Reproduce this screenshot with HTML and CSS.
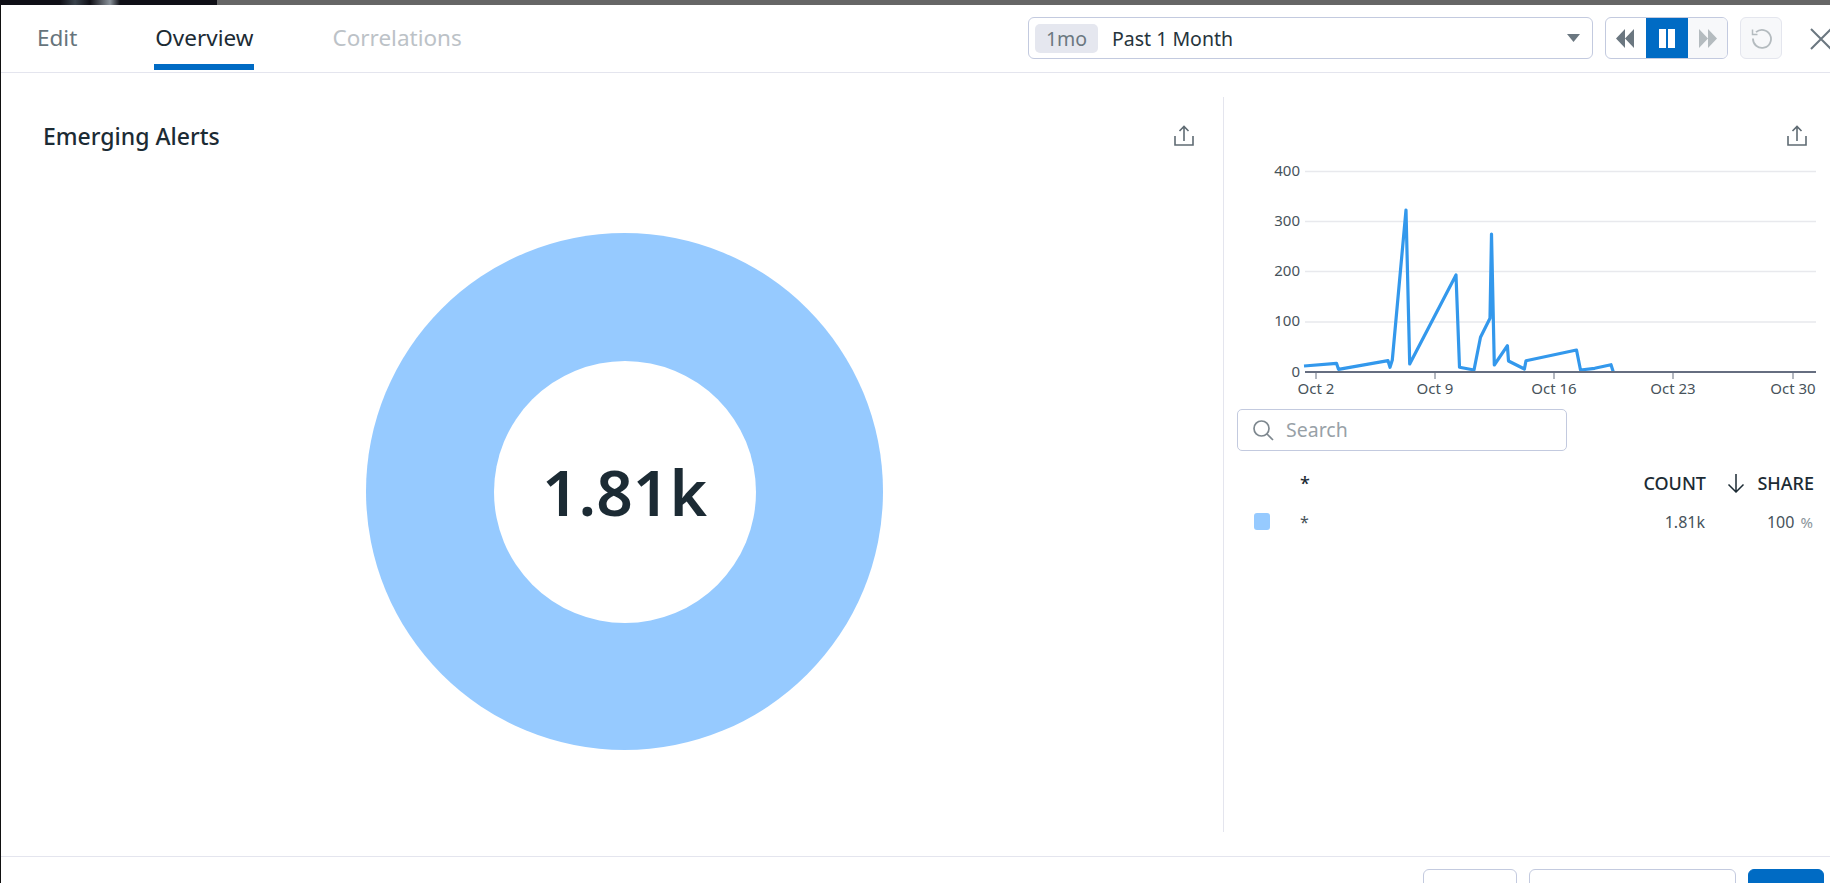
FILE: index.html
```html
<!DOCTYPE html>
<html lang="en">
<head>
    <meta charset="UTF-8">
    <title>Emerging Alerts</title>
    <link rel="stylesheet" href="styles.css">
</head>
<body>
    <div class="top-strip">
        <div class="top-strip-dark"></div>
    </div>
    <div class="modal">
        <header class="modal-header">
            <nav class="tabs">
                <a class="tab tab-edit">Edit</a>
                <a class="tab tab-active">Overview</a>
                <a class="tab tab-disabled">Correlations</a>
            </nav>
            <div class="time-select">
                <span class="time-pill">1mo</span>
                <span class="time-label">Past 1 Month</span>
                <svg class="caret" width="13" height="8" viewBox="0 0 13 8"><path d="M0 0h13L6.5 8z" fill="#6b7780"/></svg>
            </div>
            <div class="playback">
                <button class="play-btn play-back">
                    <svg width="18" height="19" viewBox="0 0 18 19"><path d="M9 0v19L0 9.500zM18 0v19L9 9.500z" fill="#6b7780"/></svg>
                </button>
                <button class="play-btn play-active">
                    <svg width="16" height="19" viewBox="0 0 16 19"><path d="M0 0h7v19H0zM9 0h7v19H9z" fill="#fff"/></svg>
                </button>
                <button class="play-btn play-off">
                    <svg width="18" height="19" viewBox="0 0 18 19"><path d="M0 0v19l9-9.500zM9 0v19l9-9.500z" fill="#b4bbbf"/></svg>
                </button>
            </div>
            <button class="reset-btn">
                <svg width="22" height="22" viewBox="0 0 22 22" fill="none" stroke="#b4bbbf" stroke-width="1.800"><path d="M6 5.200A9 9 0 1 1 3 11.500"/><path d="M2.500 2.500v5h5" stroke-width="1.500"/></svg>
            </button>
            <svg class="close-icon" width="20" height="22" viewBox="0 0 20 22" fill="none" stroke="#6b7780" stroke-width="2"><path d="M1 1l20 20M21 1L1 21"/></svg>
        </header>

        <main class="content">
            <section class="left-panel">
                <div class="panel-title-row">
                    <h2 class="panel-title">Emerging Alerts</h2>
                    <svg class="export-icon" width="20" height="21" viewBox="0 0 20 21" fill="none" stroke="#5f6b73" stroke-width="1.600"><path d="M1 11v9h18v-9M10 16V2M5.500 6L10 1.500 14.500 6"/></svg>
                </div>
                <div class="donut">
                    <div class="donut-hole">1.81k</div>
                </div>
            </section>

            <section class="right-panel">
                <div class="export-row">
                    <svg class="export-icon" width="20" height="21" viewBox="0 0 20 21" fill="none" stroke="#5f6b73" stroke-width="1.600"><path d="M1 11v9h18v-9M10 16V2M5.500 6L10 1.500 14.500 6"/></svg>
                </div>
                <svg class="chart" width="606" height="252" viewBox="1224 150 606 252">
                    <g stroke="#e8e9ed" stroke-width="1.500">
                        <path d="M1305 171.500H1816M1305 221.500H1816M1305 271.500H1816M1305 322H1816"/>
                    </g>
                    <g class="axis-y" text-anchor="end">
                        <text x="1300" y="176">400</text>
                        <text x="1300" y="226">300</text>
                        <text x="1300" y="276">200</text>
                        <text x="1300" y="326">100</text>
                        <text x="1300" y="377">0</text>
                    </g>
                    <polyline fill="none" stroke="#3398ec" stroke-width="3.200" stroke-linejoin="round" points="1304,366 1336.500,363.300 1338.500,369.300 1388,360.700 1390,367.300 1392.300,360 1406,210 1409.700,364 1456,275 1459.500,367.300 1474,370 1480.500,337.300 1490,318.300 1491.500,234 1494.300,365 1507.400,345.700 1508.500,361 1524.400,369 1526,360.700 1576.500,350 1580.500,370 1594.700,368.300 1611,364.700 1613.300,372"/>
                    <path d="M1305 372H1816" stroke="#666e80" stroke-width="2"/>
                    <path d="M1316 372v7M1435 372v7M1554 372v7M1673 372v7M1793 372v7" stroke="#666e80" stroke-width="1"/>
                    <g class="axis-x" text-anchor="middle">
                        <text x="1316" y="394">Oct 2</text>
                        <text x="1435" y="394">Oct 9</text>
                        <text x="1554" y="394">Oct 16</text>
                        <text x="1673" y="394">Oct 23</text>
                        <text x="1793" y="394">Oct 30</text>
                    </g>
                </svg>
                <div class="search-box">
                    <svg width="22" height="22" viewBox="0 0 22 22" fill="none" stroke="#7d878e" stroke-width="1.700"><circle cx="9.500" cy="9.500" r="7.500"/><path d="M15 15l6 6"/></svg>
                    <span class="search-placeholder">Search</span>
                </div>
                <div class="legend-row legend-head">
                    <span class="legend-swatch-col"></span>
                    <span class="legend-name">*</span>
                    <span class="legend-count">COUNT</span>
                    <svg class="sort-arrow" width="18" height="20" viewBox="0 0 18 20" fill="none" stroke="#1c2b34" stroke-width="1.500"><path d="M9 1v18M1.500 11.500L9 19l7.500-7.500"/></svg>
                    <span class="legend-share">SHARE</span>
                </div>
                <div class="legend-row legend-body">
                    <span class="legend-swatch-col"><i class="swatch"></i></span>
                    <span class="legend-name">*</span>
                    <span class="legend-count">1.81k</span>
                    <span class="legend-share">100 <small>%</small></span>
                </div>
            </section>
        </main>

        <footer class="modal-footer">
            <button class="foot-btn foot-small"></button>
            <button class="foot-btn foot-wide"></button>
            <button class="foot-btn foot-primary"></button>
        </footer>
    </div>
</body>
</html>
```

FILE: styles.css
```css
html, body {
    margin: 0;
    padding: 0;
    height: 883px;
    overflow: hidden;
}
body {
    font-family: "Noto Sans", sans-serif;
    color: #1c2b34;
    background: #fff;
}
button {
    padding: 0;
    font: inherit;
    background: none;
    display: flex;
    align-items: center;
    justify-content: center;
}
.top-strip {
    height: 5px;
    background: #666;
}
.top-strip-dark {
    width: 217px;
    height: 5px;
    background: linear-gradient(to right, #0f0f16 60px, #39424c 75px, #0f0f16 90px, #8a929a 110px, #0f0f16 120px);
}
.modal {
    height: 878px;
    border-left: 1px solid #111;
    overflow: hidden;
}
.modal-header {
    height: 67px;
    border-bottom: 1px solid #e4e5ee;
    display: flex;
    align-items: flex-start;
    padding-left: 35px;
}
.tabs {
    display: flex;
    height: 65px;
}
.tab {
    font-size: 22.5px;
    line-height: 30px;
    padding: 18px 1px 0;
    height: 47px;
    color: #66747c;
}
.tab-active {
    color: #1c2b34;
    height: 41px;
    margin: 0 77px 0 76px;
    border-bottom: 6px solid #006bc4;
}
.tab-disabled {
    color: #bcc2c7;
}
.time-select {
    width: 565px;
    height: 42px;
    box-sizing: border-box;
    margin: 12px 0 0 auto;
    border: 1px solid #c3cadf;
    border-radius: 6px;
    display: flex;
    align-items: center;
    padding: 0 12px 0 6px;
}
.time-pill {
    width: 63px;
    height: 29px;
    line-height: 29px;
    text-align: center;
    background: #e5e7ef;
    border-radius: 5px;
    font-size: 19.5px;
    color: #6b7780;
}
.time-label {
    font-size: 19.5px;
    margin-left: 14px;
    flex: 1;
    color: #26343c;
}
.playback {
    display: flex;
    margin: 12px 0 0 12px;
    height: 42px;
    width: 123px;
    box-sizing: border-box;
    border: 1px solid #c3cadf;
    border-radius: 6px;
    overflow: hidden;
}
.play-btn {
    width: 40px;
    flex: none;
    border: none;
}
.play-back {
    padding-right: 3px;
}
.play-active {
    width: 42px;
    background: #006bc4;
}
.play-off {
    width: 39px;
    background: #f7f8fa;
}
.reset-btn {
    width: 42px;
    height: 42px;
    margin: 12px 0 0 12px;
    box-sizing: border-box;
    border: 1px solid #e4e6ee;
    border-radius: 6px;
    background: #f7f8fa;
}
.close-icon {
    margin: 23px 0 0 28px;
    flex: none;
}
.content {
    display: flex;
    height: 783px;
}
.left-panel {
    width: 1223px;
    box-sizing: border-box;
    margin: 24px 0;
    height: 735px;
    border-right: 1px solid #e4e5ee;
    padding: 28px 29px 0 42px;
}
.panel-title-row {
    display: flex;
    justify-content: space-between;
    align-items: center;
    height: 21px;
}
.panel-title {
    margin: 0;
    font-size: 23px;
    font-weight: 500;
}
.donut {
    width: 517px;
    height: 517px;
    margin: 87px 0 0 323px;
    border-radius: 50%;
    background: #96caff;
    display: flex;
    align-items: center;
    justify-content: center;
}
.donut-hole {
    width: 262px;
    height: 262px;
    border-radius: 50%;
    background: #fff;
    display: flex;
    align-items: center;
    justify-content: center;
    font-size: 64px;
    font-weight: 600;
}
.right-panel {
    flex: 1;
    padding-top: 52px;
    min-width: 0;
}
.export-row {
    display: flex;
    justify-content: flex-end;
    padding-right: 23px;
    height: 25px;
}
.chart {
    display: block;
}
.chart text {
    font-family: "Noto Sans", sans-serif;
    font-size: 15px;
    fill: #47535b;
}
.search-box {
    margin: 7px 0 0 13px;
    width: 330px;
    height: 42px;
    box-sizing: border-box;
    border: 1px solid #c3cadf;
    border-radius: 5px;
    display: flex;
    align-items: center;
    padding-left: 14px;
    gap: 12px;
}
.search-placeholder {
    font-size: 19.5px;
    color: #98a1a7;
    padding-bottom: 2px;
}
.legend-row {
    display: flex;
    align-items: center;
    height: 39px;
    padding-right: 16px;
}
.legend-head {
    margin-top: 12px;
    font-size: 18px;
    font-weight: 500;
}
.legend-body {
    font-size: 16px;
    color: #47535b;
    padding-right: 17px;
}
.legend-swatch-col {
    width: 76px;
    padding-left: 30px;
    box-sizing: border-box;
    display: flex;
}
.swatch {
    width: 16px;
    height: 17px;
    border-radius: 3px;
    background: #96caff;
}
.legend-name {
    flex: 1;
}
.legend-share {
    width: 108px;
    text-align: right;
}
.legend-head .legend-share {
    width: 60px;
    margin-left: 9px;
}
.sort-arrow {
    margin-left: 21px;
}
.legend-share small {
    font-size: 15px;
    color: #8a949a;
    margin-left: 2px;
}
.modal-footer {
    border-top: 1px solid #e4e5ee;
    padding: 12px 6px 0 0;
    display: flex;
    justify-content: flex-end;
    gap: 12px;
}
.foot-btn {
    height: 40px;
    box-sizing: border-box;
    border: 1px solid #c3cadf;
    border-radius: 6px;
}
.foot-small {
    width: 94px;
}
.foot-wide {
    width: 207px;
}
.foot-primary {
    width: 76px;
    background: #006bc4;
    border-color: #006bc4;
}
```
